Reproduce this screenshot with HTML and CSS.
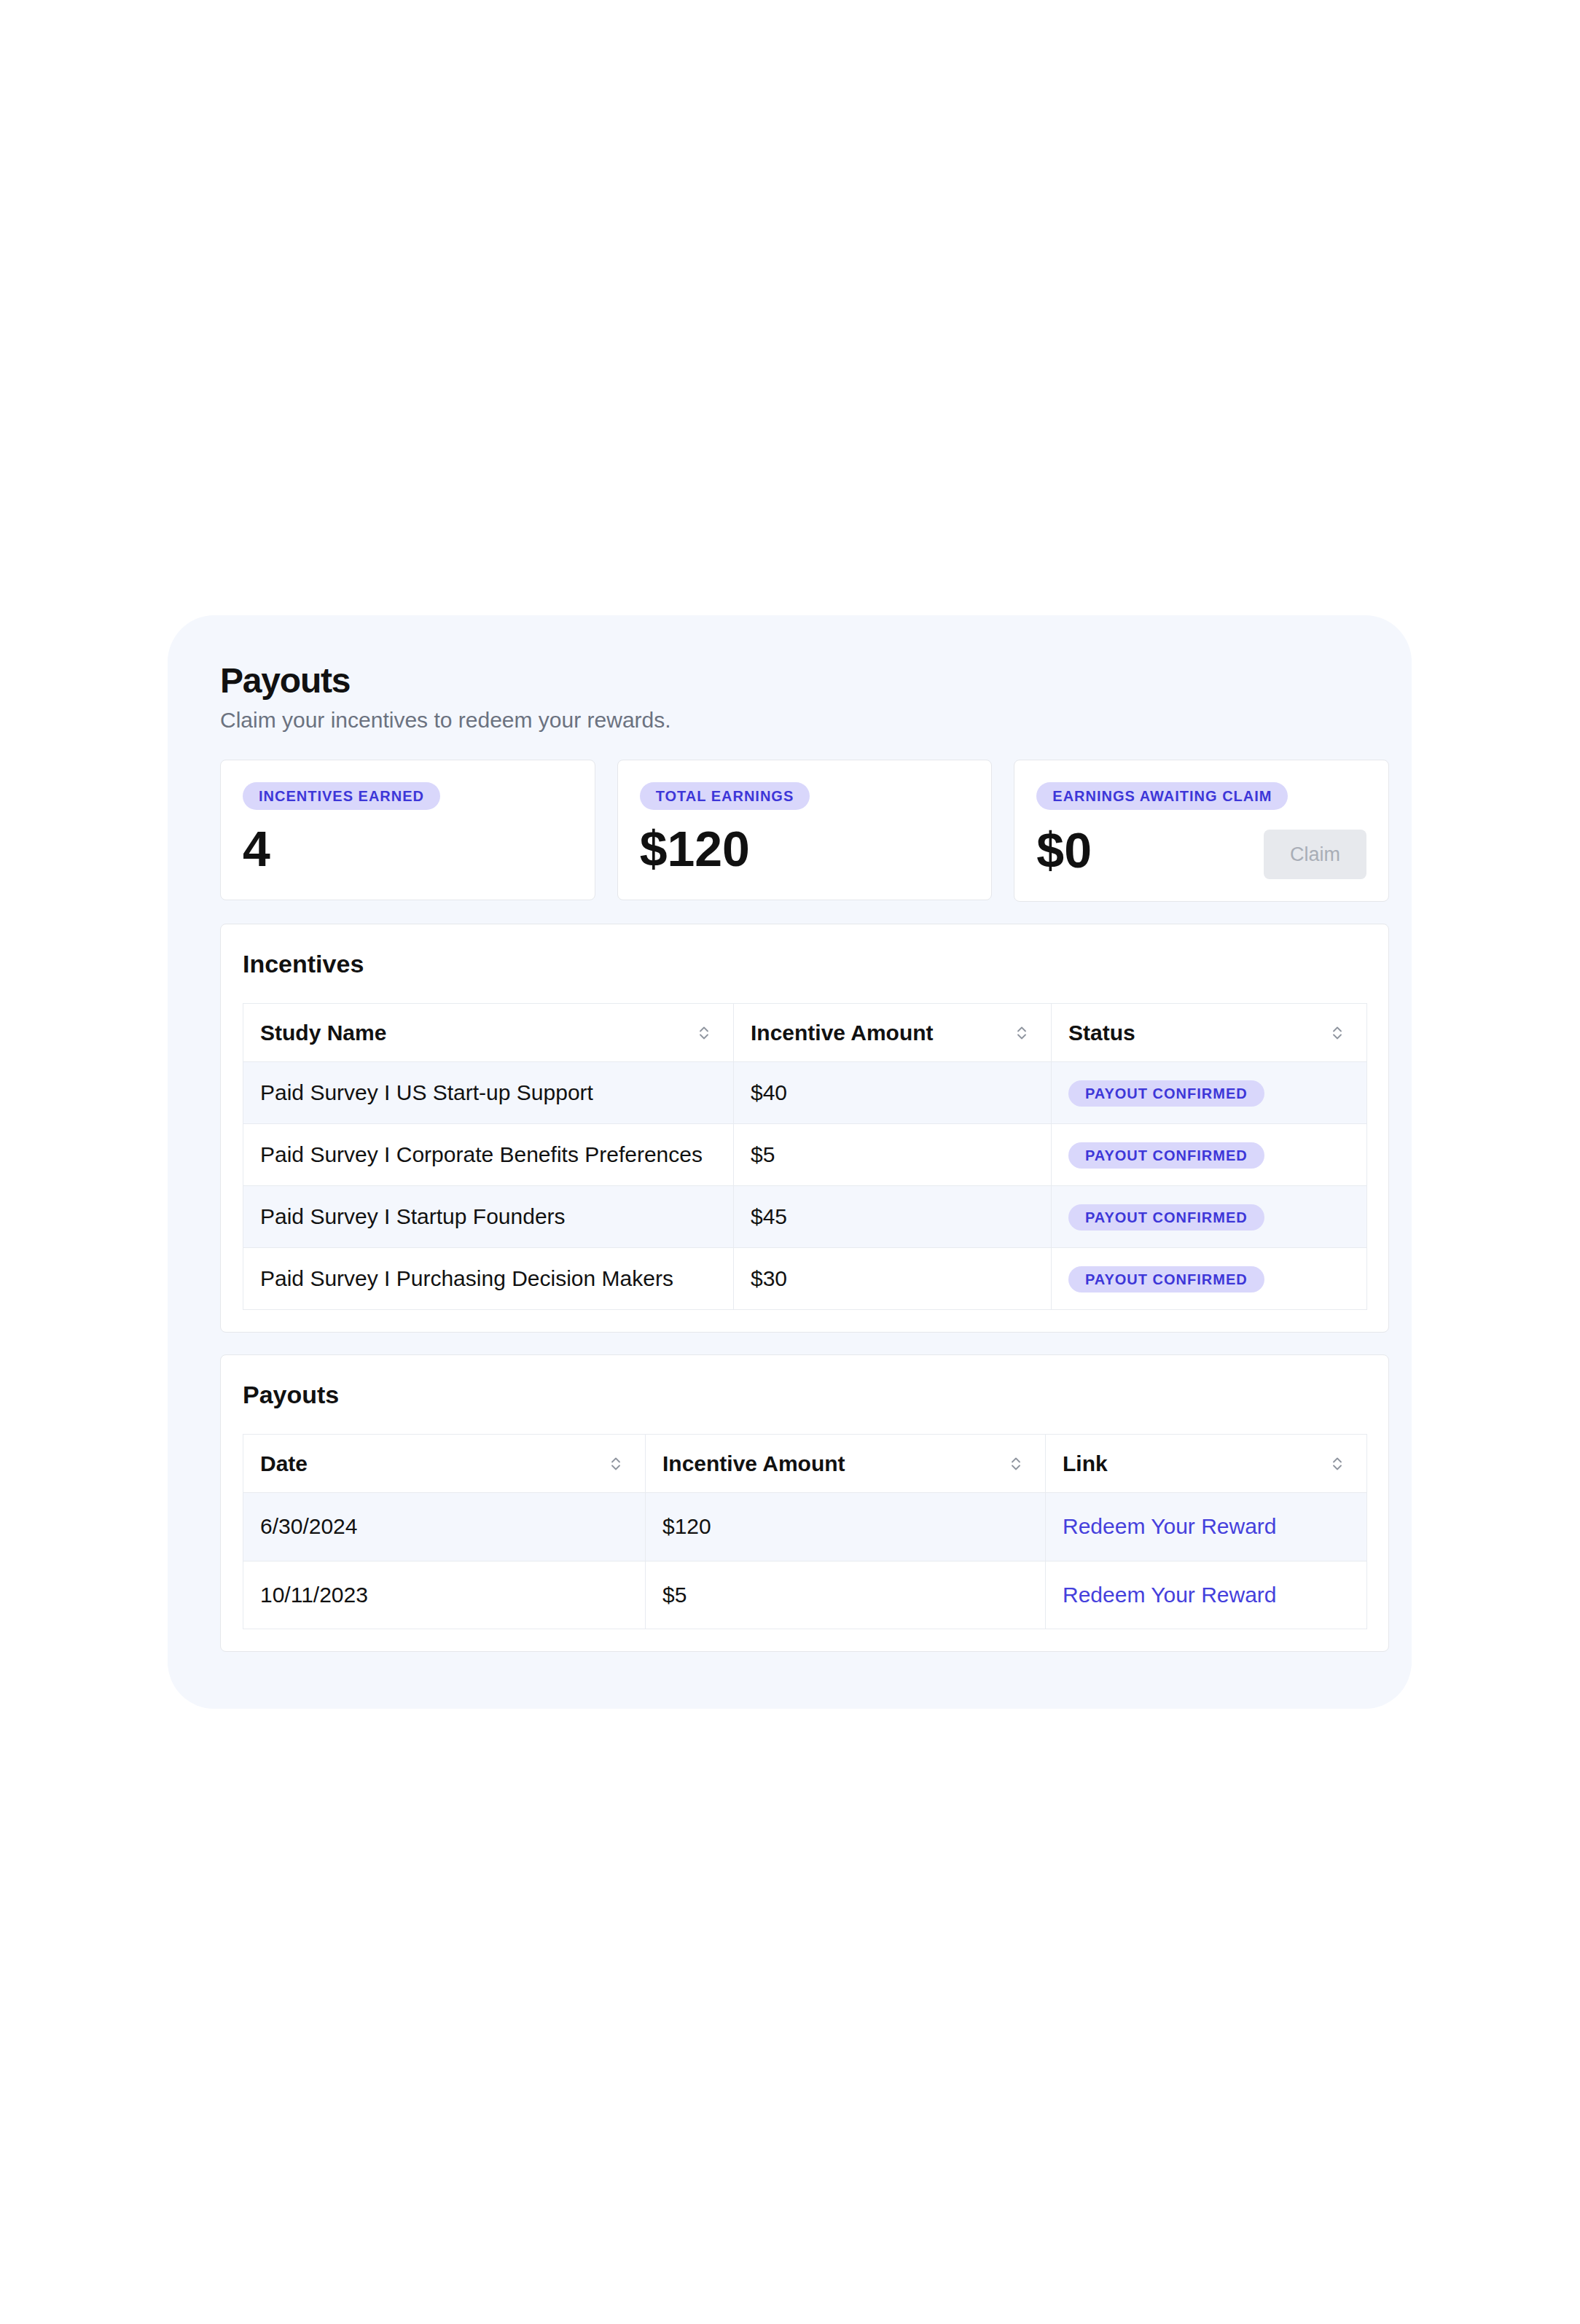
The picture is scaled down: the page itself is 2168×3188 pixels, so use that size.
FILE: index.html
```html
<!DOCTYPE html>
<html lang="en">
<head>
  <meta charset="UTF-8" />
  <title>Payouts</title>
  <link rel="stylesheet" href="styles.css">
</head>
<body>

<div class="panel">
  <h1>Payouts</h1>
  <p class="subtitle">Claim your incentives to redeem your rewards.</p>

  <div class="stats">
    <div class="stat-card">
      <span class="badge">Incentives Earned</span>
      <div class="stat-row">
        <div class="stat-value">4</div>
      </div>
    </div>
    <div class="stat-card">
      <span class="badge">Total Earnings</span>
      <div class="stat-row">
        <div class="stat-value">$120</div>
      </div>
    </div>
    <div class="stat-card">
      <span class="badge">Earnings Awaiting Claim</span>
      <div class="stat-row">
        <div class="stat-value">$0</div>
        <button class="claim-btn" disabled>Claim</button>
      </div>
    </div>
  </div>

  <div class="section">
    <h2>Incentives</h2>
    <table>
      <colgroup>
        <col class="col-study">
        <col class="col-amount">
        <col class="col-status">
      </colgroup>
      <thead>
        <tr>
          <th><div class="th-inner">Study Name <svg class="sort" viewBox="0 0 14 20"><path d="M2 7.5 7 2.5 12 7.5M2 12.5 7 17.5 12 12.5"/></svg></div></th>
          <th><div class="th-inner">Incentive Amount <svg class="sort" viewBox="0 0 14 20"><path d="M2 7.5 7 2.5 12 7.5M2 12.5 7 17.5 12 12.5"/></svg></div></th>
          <th><div class="th-inner">Status <svg class="sort" viewBox="0 0 14 20"><path d="M2 7.5 7 2.5 12 7.5M2 12.5 7 17.5 12 12.5"/></svg></div></th>
        </tr>
      </thead>
      <tbody>
        <tr>
          <td>Paid Survey I US Start-up Support</td>
          <td>$40</td>
          <td><span class="badge badge-sm">Payout Confirmed</span></td>
        </tr>
        <tr>
          <td>Paid Survey I Corporate Benefits Preferences</td>
          <td>$5</td>
          <td><span class="badge badge-sm">Payout Confirmed</span></td>
        </tr>
        <tr>
          <td>Paid Survey I Startup Founders</td>
          <td>$45</td>
          <td><span class="badge badge-sm">Payout Confirmed</span></td>
        </tr>
        <tr>
          <td>Paid Survey I Purchasing Decision Makers</td>
          <td>$30</td>
          <td><span class="badge badge-sm">Payout Confirmed</span></td>
        </tr>
      </tbody>
    </table>
  </div>

  <div class="section">
    <h2>Payouts</h2>
    <table class="payouts">
      <colgroup>
        <col class="col-date">
        <col class="col-paid">
        <col class="col-link">
      </colgroup>
      <thead>
        <tr>
          <th><div class="th-inner">Date <svg class="sort" viewBox="0 0 14 20"><path d="M2 7.5 7 2.5 12 7.5M2 12.5 7 17.5 12 12.5"/></svg></div></th>
          <th><div class="th-inner">Incentive Amount <svg class="sort" viewBox="0 0 14 20"><path d="M2 7.5 7 2.5 12 7.5M2 12.5 7 17.5 12 12.5"/></svg></div></th>
          <th><div class="th-inner">Link <svg class="sort" viewBox="0 0 14 20"><path d="M2 7.5 7 2.5 12 7.5M2 12.5 7 17.5 12 12.5"/></svg></div></th>
        </tr>
      </thead>
      <tbody>
        <tr>
          <td>6/30/2024</td>
          <td>$120</td>
          <td><a href="#">Redeem Your Reward</a></td>
        </tr>
        <tr>
          <td>10/11/2023</td>
          <td>$5</td>
          <td><a href="#">Redeem Your Reward</a></td>
        </tr>
      </tbody>
    </table>
  </div>
</div>

</body>
</html>
```

FILE: styles.css
```css
body { margin: 0; background: #fff; font-family: "Liberation Sans", Arial, Helvetica, sans-serif; color: #111; }

.panel { width: 1707px; box-sizing: border-box; margin: 844px 0 0 230px; padding: 58px 31px 78px 72px; background: #f4f7fd; border-radius: 64px; }
h1 { margin: 0; font-size: 48px; line-height: 64px; font-weight: 700; letter-spacing: -1.2px; }
.subtitle { margin: 2px 0 0; font-size: 30px; line-height: 40px; color: #6b7280; }

.stats { display: grid; grid-template-columns: repeat(3, 1fr); gap: 30px; align-items: start; margin-top: 34px; }
.stat-card { display: flex; flex-direction: column; align-items: flex-start; background: #fff; border: 1px solid #e5e7eb; border-radius: 8px; padding: 30px; }
.stat-row { display: flex; justify-content: space-between; align-items: flex-end; align-self: stretch; margin-top: 13px; }
.stat-value { font-size: 68px; line-height: 80px; font-weight: 700; }
.claim-btn { margin-top: 14px; width: 141px; height: 68px; border: 0; border-radius: 8px; background: #e7e9ed; color: #a9aeb7; font-family: inherit; font-size: 27px; }

.badge { display: inline-block; height: 38px; line-height: 38px; padding: 0 22px; border-radius: 19px; background: #d9d7fb; color: #3d36d8; font-size: 20px; font-weight: 700; letter-spacing: 1px; text-transform: uppercase; white-space: nowrap; }
.badge-sm { height: 36px; line-height: 36px; padding: 0 23px; border-radius: 18px; vertical-align: middle; }

.section { margin-top: 30px; background: #fff; border: 1px solid #e5e7eb; border-radius: 8px; padding: 30px; }
h2 { margin: 0 0 30px; font-size: 34px; line-height: 48px; font-weight: 700; }

table { border-collapse: collapse; width: 100%; table-layout: fixed; border: 1px solid #e5e7eb; background: #fff; }
th, td { border: 1px solid #e8ebf0; padding: 0 23px; text-align: left; font-size: 30px; white-space: nowrap; }
th { padding-right: 33px; font-weight: 700; }
thead tr { height: 80px; }
tbody tr { height: 85px; }
.payouts tbody tr { height: 93.5px; }
tbody tr:nth-child(odd) { background: #f4f7fd; }

.th-inner { display: flex; justify-content: space-between; align-items: center; }
.sort { width: 14px; height: 20px; fill: none; stroke: #8e949e; stroke-width: 1.8; stroke-linecap: round; stroke-linejoin: round; }

.col-study { width: 673px; }
.col-amount { width: 436px; }
.col-status { width: 433px; }
.col-date { width: 552px; }
.col-paid { width: 549px; }
.col-link { width: 441px; }

a { color: #4540dc; text-decoration: none; }
```
